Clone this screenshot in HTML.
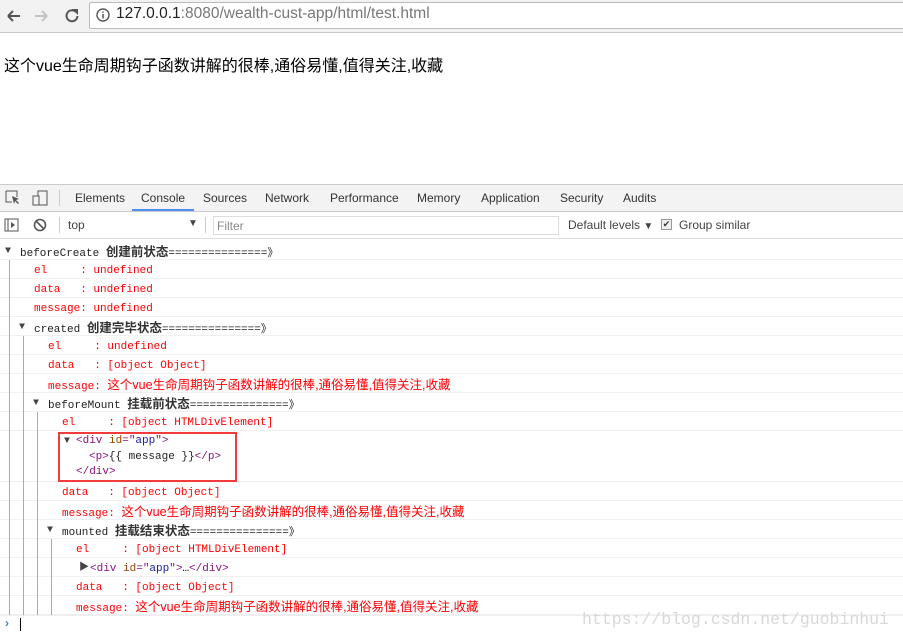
<!DOCTYPE html>
<html><head><meta charset="utf-8"><style>
*{margin:0;padding:0;box-sizing:border-box}
body{width:903px;height:641px;overflow:hidden;background:#fff;position:relative;font-family:"Liberation Sans","Noto Sans CJK SC",sans-serif}
.a{position:absolute;white-space:pre}
.tab{position:absolute;top:191px;font-size:12px;color:#333}
.row{position:absolute;left:0;width:903px;height:19px;border-bottom:1px solid #f0f0f0;font-family:"Liberation Mono","Noto Sans CJK SC",monospace;font-size:11px;line-height:19px;white-space:pre}
.row .a{top:2px}
.r{color:#f00}
.r .c{font-family:"Liberation Sans","Noto Sans CJK SC",sans-serif;font-size:12.5px}
.b{color:#222}
.b .c{font-family:"Liberation Sans","Noto Sans CJK SC",sans-serif;font-weight:bold;font-size:12.5px;color:#333}
.tri{position:absolute;font-size:10px;color:#444;top:1px}
.vl{position:absolute;width:1px;background:#aaa}
.tg{color:#881280}.at{color:#994500}.av{color:#1a1aa6}
</style></head><body>
<div class="a" style="left:0;top:0;width:903px;height:33px;background:#f2f2f2;border-bottom:1px solid #c8c8c8"></div>
<svg class="a" style="top:6px;left:5px" width="80" height="20" viewBox="0 0 80 20">
<path d="M3 10h12M3 10l5-5M3 10l5 5" stroke="#555" stroke-width="2" fill="none"/>
<path d="M30 10h12M42 10l-5-5M42 10l-5 5" stroke="#c4c4c4" stroke-width="2" fill="none"/>
<path d="M71 6a5.5 5.5 0 1 0 1.5 4" stroke="#555" stroke-width="2" fill="none"/><path d="M67 3h6v6z" fill="#555"/>
</svg>
<div class="a" style="left:89px;top:2px;width:820px;height:27px;background:#fff;border:1px solid #bbb;border-radius:2px"></div>
<svg class="a" style="left:96px;top:8px" width="14" height="14"><circle cx="7" cy="7" r="6" stroke="#555" stroke-width="1.4" fill="none"/><path d="M7 6v4.5M7 3.5v1.3" stroke="#555" stroke-width="1.5"/></svg>
<div class="a" style="left:116px;top:5px;font-size:15.5px;color:#777"><span style="color:#222">127.0.0.1</span>:8080/wealth-cust-app/html/test.html</div>
<div class="a" style="left:4px;top:52px;font-size:16px;color:#000">这个vue生命周期钩子函数讲解的很棒,通俗易懂,值得关注,收藏</div>
<div class="a" style="left:0;top:184px;width:903px;height:28px;background:#f3f3f3;border-top:1px solid #ccc;border-bottom:1px solid #ccc"></div>
<svg class="a" style="left:5px;top:190px" width="46" height="16"><path d="M1 1h11v6M1 1v11h6" stroke="#555" fill="none"/><path d="M7 6l7 3-3 1 3 3-1 1-3-3-1 3z" fill="#555"/><rect x="33" y="1" width="9" height="14" stroke="#555" fill="none"/><rect x="28" y="6" width="6" height="9" stroke="#555" fill="#f3f3f3"/></svg>
<div class="a" style="left:59px;top:190px;width:1px;height:16px;background:#ccc"></div>
<div class="tab" style="left:75px">Elements</div>
<div class="tab" style="left:141px">Console</div>
<div class="a" style="left:132px;top:209px;width:62px;height:2px;background:#4d8ff0"></div>
<div class="tab" style="left:203px">Sources</div>
<div class="tab" style="left:265px">Network</div>
<div class="tab" style="left:330px">Performance</div>
<div class="tab" style="left:417px">Memory</div>
<div class="tab" style="left:481px">Application</div>
<div class="tab" style="left:560px">Security</div>
<div class="tab" style="left:623px">Audits</div>
<div class="a" style="left:0;top:212px;width:903px;height:27px;background:#fff;border-bottom:1px solid #ddd"></div>
<svg class="a" style="left:4px;top:218px" width="44" height="15"><rect x="1" y="1" width="13" height="12" stroke="#555" fill="none"/><path d="M4 1v12" stroke="#555"/><path d="M7 4l4 3-4 3z" fill="#555"/><circle cx="36" cy="7" r="5.5" stroke="#555" stroke-width="1.6" fill="none"/><path d="M32 3l8 8" stroke="#555" stroke-width="1.6"/></svg>
<div class="a" style="left:59px;top:217px;width:1px;height:16px;background:#ccc"></div>
<div class="a" style="left:68px;top:218px;font-size:12px;color:#444">top</div>
<div class="a" style="left:188px;top:218px;font-size:10px;color:#444">▼</div>
<div class="a" style="left:205px;top:217px;width:1px;height:16px;background:#ccc"></div>
<div class="a" style="left:213px;top:216px;width:346px;height:19px;border:1px solid #ddd"></div>
<div class="a" style="left:217px;top:219px;font-size:12px;color:#888">Filter</div>
<div class="a" style="left:568px;top:218px;font-size:12px;color:#444">Default levels <span style="font-size:10px">▼</span></div>
<div class="a" style="left:661px;top:219px;width:11px;height:11px;border:1px solid #999;background:#eee;font-size:9px;line-height:9px;text-align:center;color:#333">✔</div>
<div class="a" style="left:679px;top:218px;font-size:12px;color:#444">Group similar</div>
<div class="row b" style="top:241px"><span class="tri" style="left:5px">▼</span><span class="a" style="left:20px">beforeCreate <span class="c">创建前状态</span>===============》</span></div>
<div class="row r" style="top:260px"><span class="a" style="left:34px">el     : undefined</span></div>
<div class="row r" style="top:279px"><span class="a" style="left:34px">data   : undefined</span></div>
<div class="row r" style="top:298px"><span class="a" style="left:34px">message: undefined</span></div>
<div class="row b" style="top:317px"><span class="tri" style="left:19px">▼</span><span class="a" style="left:34px">created <span class="c">创建完毕状态</span>===============》</span></div>
<div class="row r" style="top:336px"><span class="a" style="left:48px">el     : undefined</span></div>
<div class="row r" style="top:355px"><span class="a" style="left:48px">data   : [object Object]</span></div>
<div class="row r" style="top:374px"><span class="a" style="left:48px">message: <span class="c">这个vue生命周期钩子函数讲解的很棒,通俗易懂,值得关注,收藏</span></span></div>
<div class="row b" style="top:393px"><span class="tri" style="left:33px">▼</span><span class="a" style="left:48px">beforeMount <span class="c">挂载前状态</span>===============》</span></div>
<div class="row r" style="top:412px"><span class="a" style="left:62px">el     : [object HTMLDivElement]</span></div>
<div class="row" style="top:431px;height:51px;line-height:15px;color:#222">
<span class="tri" style="left:64px;top:3px">▼</span>
<span class="a" style="left:76px;top:3px"><span class="tg">&lt;div</span> <span class="at">id</span><span class="tg">="</span><span class="av">app</span><span class="tg">"&gt;</span></span>
<span class="a" style="left:89px;top:19px"><span class="tg">&lt;p&gt;</span>{{ message }}<span class="tg">&lt;/p&gt;</span></span>
<span class="a" style="left:76px;top:34px"><span class="tg">&lt;/div&gt;</span></span></div>
<div class="a" style="left:58px;top:432px;width:179px;height:50px;border:2px solid #f23c3c"></div>
<div class="row r" style="top:482px"><span class="a" style="left:62px">data   : [object Object]</span></div>
<div class="row r" style="top:501px"><span class="a" style="left:62px">message: <span class="c">这个vue生命周期钩子函数讲解的很棒,通俗易懂,值得关注,收藏</span></span></div>
<div class="row b" style="top:520px"><span class="tri" style="left:47px">▼</span><span class="a" style="left:62px">mounted <span class="c">挂载结束状态</span>===============》</span></div>
<div class="row r" style="top:539px"><span class="a" style="left:76px">el     : [object HTMLDivElement]</span></div>
<div class="row" style="top:558px"><span class="tri" style="left:79px">▶</span><span class="a" style="left:90px"><span class="tg">&lt;div</span> <span class="at">id</span><span class="tg">="</span><span class="av">app</span><span class="tg">"&gt;</span>…<span class="tg">&lt;/div&gt;</span></span></div>
<div class="row r" style="top:577px"><span class="a" style="left:76px">data   : [object Object]</span></div>
<div class="row r" style="top:596px"><span class="a" style="left:76px">message: <span class="c">这个vue生命周期钩子函数讲解的很棒,通俗易懂,值得关注,收藏</span></span></div>
<div class="vl" style="left:9px;top:260px;height:355px"></div>
<div class="vl" style="left:23px;top:336px;height:279px"></div>
<div class="vl" style="left:37px;top:412px;height:203px"></div>
<div class="vl" style="left:51px;top:539px;height:76px"></div>
<div class="a" style="left:0;top:615px;width:903px;height:1px;background:#eee"></div>
<div class="a" style="left:5px;top:616px;font-size:12px;color:#367cf1;font-weight:bold">›</div>
<div class="a" style="left:20px;top:618px;width:1px;height:13px;background:#000"></div>
<div class="a" style="left:582px;top:610px;font-family:'Liberation Mono',monospace;font-size:16.5px;color:#d8d8d8">https://blog.csdn.net/guobinhui</div>
</body></html>
